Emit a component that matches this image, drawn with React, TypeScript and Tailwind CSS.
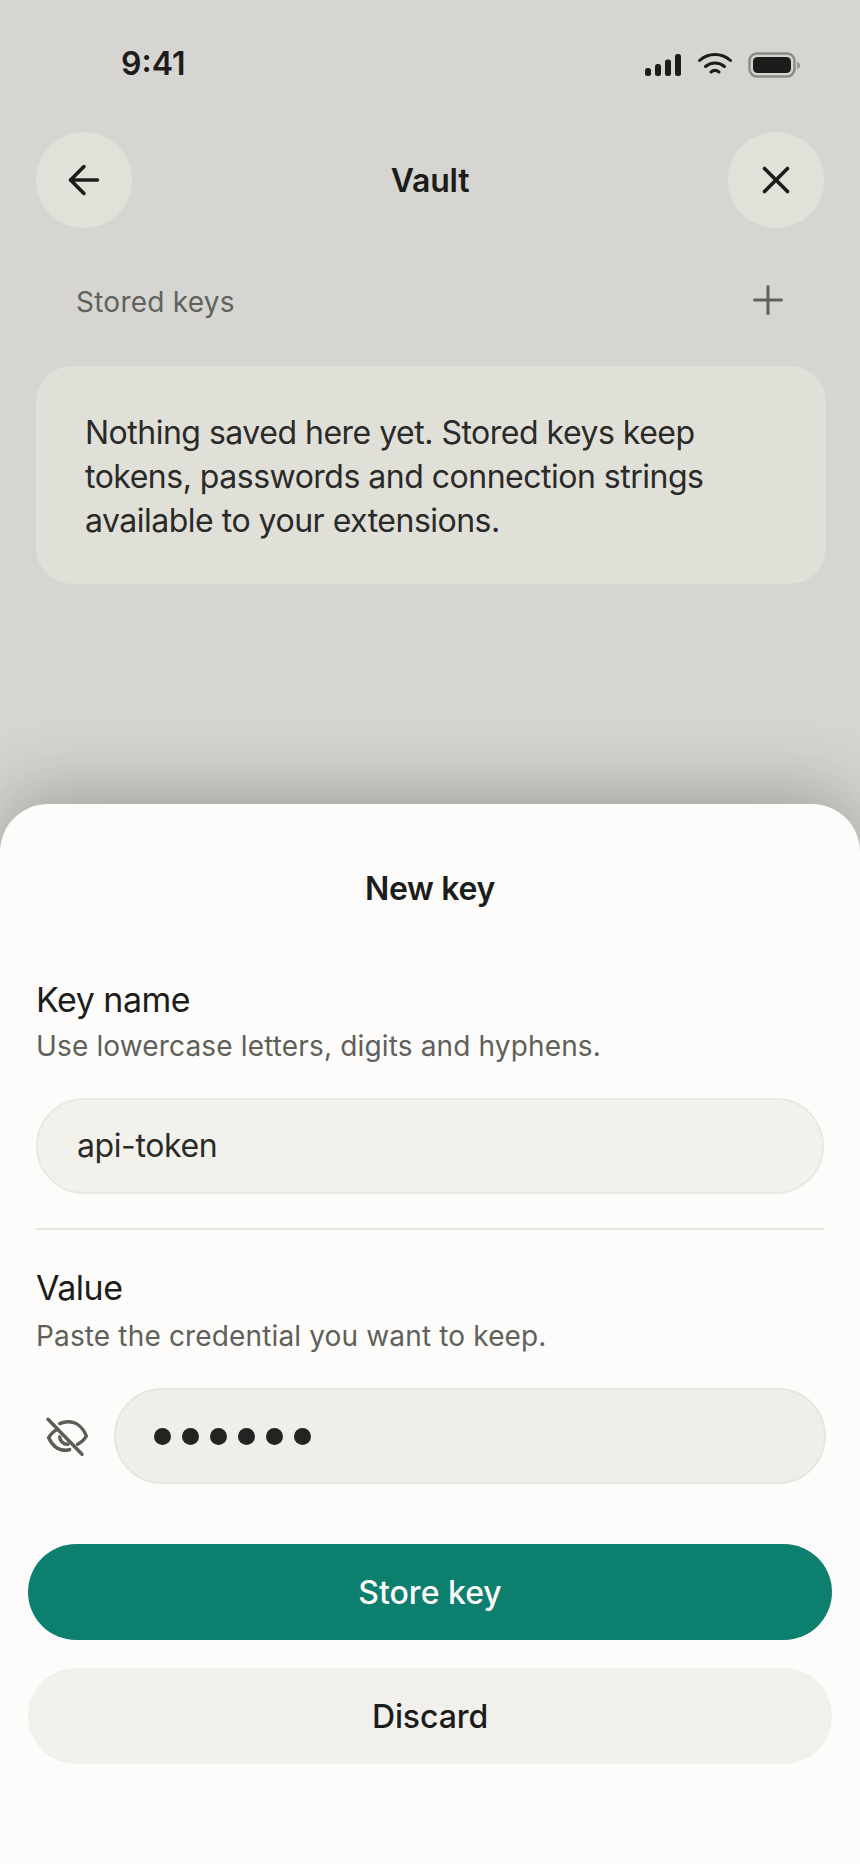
import { ArrowLeft, Plus, X } from 'lucide-react'

const StatusIcons = () => (
  <div className="flex items-center gap-[15px]">
    <svg width="38" height="24" viewBox="0 0 38 24" className="text-[#1c1c1a]" fill="currentColor">
      <rect x="1" y="15" width="6" height="8" rx="2.5" />
      <rect x="11" y="11" width="6" height="12" rx="2.5" />
      <rect x="21" y="6.5" width="6" height="16.5" rx="2.5" />
      <rect x="31" y="1" width="6" height="22" rx="2.5" />
    </svg>
    <svg width="36" height="26" viewBox="0 0 36 26" fill="none" stroke="#1c1c1a" strokeWidth="3" strokeLinecap="round">
      <path d="M2.5 8.5C11.5 0.5 24.5 0.5 33.5 8.5" />
      <path d="M8.5 14.5C14 9.8 22 9.8 27.5 14.5" />
      <path d="M14 20C16.5 18 19.5 18 22 20" />
    </svg>
    <svg width="52" height="26" viewBox="0 0 52 26" fill="none">
      <rect x="1.5" y="1.5" width="45" height="23" rx="7.5" stroke="#8b8a86" strokeWidth="2.4" />
      <rect x="5" y="5" width="38" height="16" rx="4.5" fill="#1c1c1a" />
      <path d="M49 9.5L52 12V15L49 17.5Z" fill="#9a9995" />
    </svg>
  </div>
)

const HiddenEye = () => (
  <svg width="50" height="44" viewBox="0 0 50 44" fill="none" stroke="#5c5c58" strokeWidth="3.4" strokeLinecap="round" className="ml-[6px] shrink-0">
    <path d="M6 5.3L40 40.3" />
    <path d="M15.3 15.5C11 17.5 8.5 20.5 6.7 23.7C10 31 16 36.3 24 36.3C26 36.3 27 36 27.7 35.5" />
    <path d="M17.7 9.6C20 8.5 23 7.7 26 7.7C34 7.7 41 13 44.3 22C42.5 25.5 39 28.5 35.5 30.3" />
    <path d="M17.7 23C18 27 21.5 30.5 26 30.3" />
  </svg>
)

const CircleButton = ({ children }: { children: React.ReactNode }) => (
  <button className="flex h-24 w-24 items-center justify-center rounded-full bg-[#e1e1da] text-[#1c1c1a]">
    {children}
  </button>
)

const Field = ({ label, hint, hintClass }: { label: string; hint: string; hintClass: string }) => (
  <div>
    <div className="text-[34px] leading-[40px] tracking-[-0.5px] text-[#1c1c1a]">{label}</div>
    <div className={`${hintClass} text-[28px] leading-[40px] tracking-[0.15px] text-[#5f5f5b]`}>{hint}</div>
  </div>
)

export default function App() {
  return (
    <div className="flex h-[1864px] w-[860px] flex-col overflow-hidden bg-[#d6d5d1] font-['Inter',sans-serif]">
      {/* background screen */}
      <div className="flex-1">
        <div className="flex h-[132px] items-start justify-between pl-[121px] pr-[60px] pt-[44px]">
          <span className="text-[32px] font-semibold leading-10 text-[#1c1c1a]">9:41</span>
          <div className="pt-[8px]">
            <StatusIcons />
          </div>
        </div>

        <div className="flex items-center justify-between px-9">
          <CircleButton>
            <ArrowLeft size={46} strokeWidth={1.9} />
          </CircleButton>
          <span className="mt-[2px] text-[32px] font-semibold tracking-[-0.2px] text-[#1c1c1a]">Vault</span>
          <CircleButton>
            <X size={46} strokeWidth={1.9} />
          </CircleButton>
        </div>

        <div className="mt-[52px] flex h-11 items-center justify-between pl-[76px] pr-[69px]">
          <span className="text-[28px] tracking-[0.25px] text-[#61615d]">Stored keys</span>
          <Plus size={46} strokeWidth={1.6} className="-mt-1 text-[#61615d]" />
        </div>

        <div className="ml-9 mr-[34px] mt-[42px] rounded-[36px] bg-[#e0e0d9] pb-[41px] pl-[49px] pr-[40px] pt-[45px] text-[32px] leading-[44px] tracking-[-0.5px] text-[#2a2a28]">
          Nothing saved here yet. Stored keys keep tokens, passwords and connection strings available to your extensions.
        </div>
      </div>

      {/* new key sheet */}
      <div className="h-[1060px] rounded-t-[48px] bg-[#fdfcfa] px-9 pt-[63px] shadow-[0_-12px_70px_rgba(40,40,35,0.3)]">
        <div className="text-center text-[32px] font-semibold leading-[44px] tracking-[-0.3px] text-[#1c1c1a]">New key</div>

        <div className="mt-[69px]">
          <Field label="Key name" hint="Use lowercase letters, digits and hyphens." hintClass="mt-[6px]" />
        </div>
        <div className="mt-[32px] flex h-24 items-center rounded-full border-2 border-[#e9e8e2] bg-[#f2f1ec] px-[39px] text-[32px] tracking-[-0.4px] text-[#2a2a28]">
          api-token
        </div>

        <div className="mt-[34px] h-[2px] bg-[#e5e5e0]" />

        <div className="mt-[38px]">
          <Field label="Value" hint="Paste the credential you want to keep." hintClass="mt-[8px]" />
        </div>
        <div className="mt-[32px] flex items-center gap-[22px]">
          <HiddenEye />
          <div className="mr-[-2px] flex h-24 flex-1 items-center gap-[11px] rounded-full border-2 border-[#e6e5df] bg-[#efeee9] px-[38px]">
            {[0, 1, 2, 3, 4, 5].map((d) => (
              <span key={d} className="h-[17px] w-[17px] rounded-full bg-[#232321]" />
            ))}
          </div>
        </div>

        <div className="mx-[-8px] mt-[60px] flex flex-col gap-[28px]">
          <button className="h-24 rounded-full bg-[#0d7f6e] pt-[2px] text-[32px] font-medium text-[#fdfcfa]">Store key</button>
          <button className="h-24 rounded-full bg-[#f1f0ec] pt-[2px] text-[32px] font-medium tracking-[-0.1px] text-[#1c1c1a]">Discard</button>
        </div>
      </div>
    </div>
  )
}
